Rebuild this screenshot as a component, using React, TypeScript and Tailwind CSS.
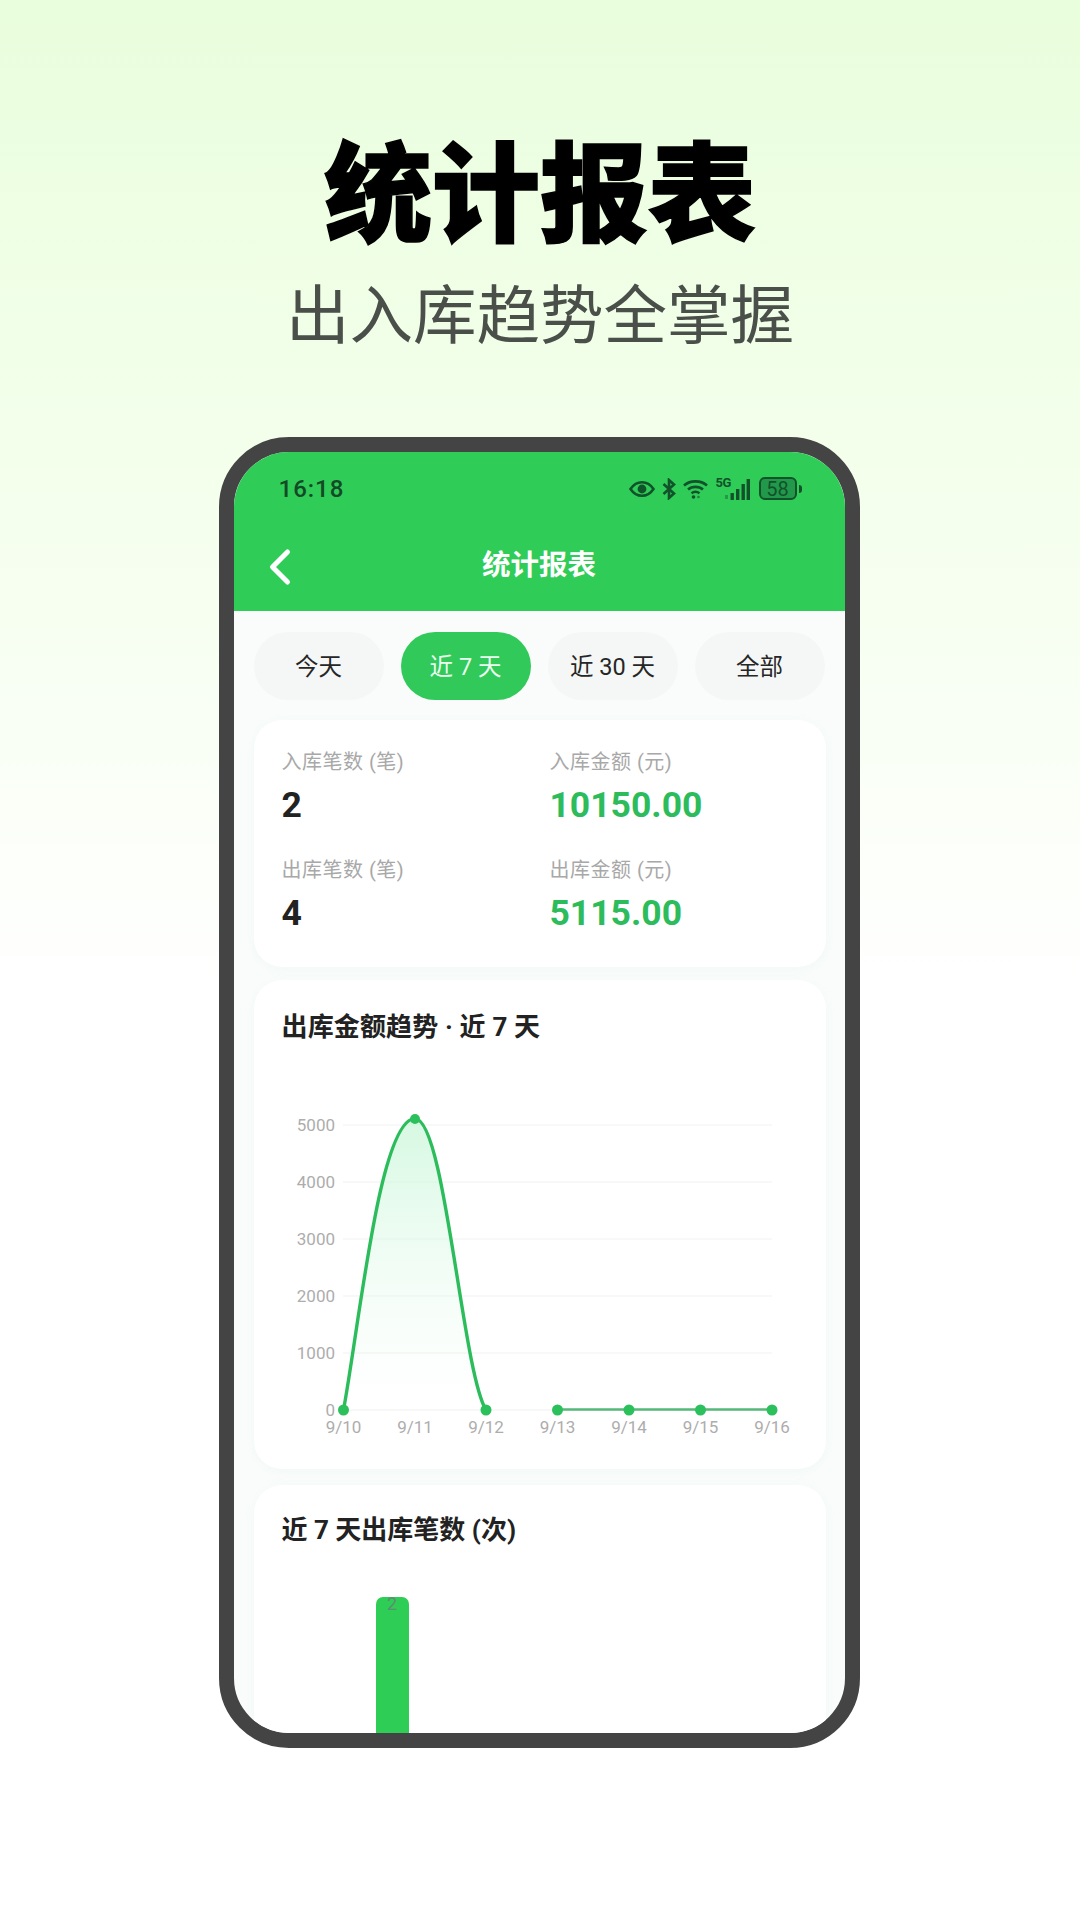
import { ChevronLeft } from 'lucide-react';

const tabs = ['今天', '近 7 天', '近 30 天', '全部'];

const stats = [
  { label: '入库笔数 (笔)', value: '2', green: false },
  { label: '入库金额 (元)', value: '10150.00', green: true },
  { label: '出库笔数 (笔)', value: '4', green: false },
  { label: '出库金额 (元)', value: '5115.00', green: true },
];

const yTicks = [
  { label: '5000', y: 125 },
  { label: '4000', y: 182 },
  { label: '3000', y: 239 },
  { label: '2000', y: 296 },
  { label: '1000', y: 353 },
  { label: '0', y: 410 },
];

const dates = ['9/10', '9/11', '9/12', '9/13', '9/14', '9/15', '9/16'];
const pointX = [90.5, 162, 233, 304.5, 376, 447.5, 519];

function StatusIcons() {
  return (
    <div className="flex items-center text-[#12522a]">
      <svg width="26" height="18" viewBox="0 0 26 18" fill="none">
        <path d="M1.5 9C4.5 4.5 8 2.2 13 2.2S21.5 4.5 24.5 9C21.5 13.5 18 15.8 13 15.8S4.5 13.5 1.5 9Z" stroke="currentColor" strokeWidth="2.6" />
        <circle cx="13" cy="9" r="4.4" fill="currentColor" />
      </svg>
      <svg className="ml-[7px]" width="14" height="22" viewBox="0 0 14 22" fill="none">
        <path d="M1.5 6L12 15.5L7 20V2L12 6.5L1.5 16" stroke="currentColor" strokeWidth="2.6" />
      </svg>
      <svg className="ml-[7px]" width="25" height="20" viewBox="0 0 25 20" fill="none">
        <path d="M1 6.5C7 1 18 1 24 6.5" stroke="currentColor" strokeWidth="2.6" />
        <path d="M5 10.5C9 7 16 7 20 10.5" stroke="currentColor" strokeWidth="2.6" />
        <path d="M8.5 14.2C11 12.3 14 12.3 16.5 14.2" stroke="currentColor" strokeWidth="2.4" />
        <circle cx="10.5" cy="18" r="1.8" fill="currentColor" />
        <circle cx="15.5" cy="18" r="1.3" fill="currentColor" opacity="0.6" />
      </svg>
      <div className="relative ml-[8px] h-[24px] w-[34px]">
        <span className="absolute left-0 top-[-1px] text-[13px] font-bold leading-[14px] tracking-[-0.5px]">5G</span>
        <svg className="absolute bottom-0 left-0" width="34" height="24" viewBox="0 0 34 24" fill="currentColor">
          <rect x="9" y="18" width="3" height="4" opacity="0.4" />
          <rect x="14.5" y="16" width="3.4" height="7" />
          <rect x="20" y="12" width="3.4" height="11" />
          <rect x="25.5" y="7" width="3.4" height="16" />
          <rect x="30.6" y="2" width="3.4" height="21" />
        </svg>
      </div>
      <div className="ml-[9px] flex h-[23px] w-[38px] items-center justify-center rounded-[6px] border-2 border-current bg-[#22994a] text-[20px] leading-none">
        58
      </div>
      <div className="ml-[2px] h-[8px] w-[3px] rounded-r-sm bg-current" />
    </div>
  );
}

function TrendChart() {
  return (
    <svg className="mt-[36px] block" width="574" height="360" viewBox="1 80 574 360">
      <defs>
        <linearGradient id="area" x1="0" y1="0" x2="0" y2="1">
          <stop offset="0%" stopColor="#c8f6d8" stopOpacity="0.75" />
          <stop offset="100%" stopColor="#eafcf0" stopOpacity="0" />
        </linearGradient>
      </defs>
      {yTicks.map((t) => (
        <g key={t.label}>
          <line x1="90" x2="519" y1={t.y} y2={t.y} stroke="#f4f6f5" strokeWidth="1.5" />
          <text x="82" y={t.y + 6} textAnchor="end" fontSize="17" fill="#adadad">
            {t.label}
          </text>
        </g>
      ))}
      <path d="M90.5 410C107 320 127 118.6 162 118.6C192 118.6 209 370 233 410Z" fill="url(#area)" />
      <path
        d="M90.5 410C107 320 127 118.6 162 118.6C192 118.6 209 370 233 410"
        fill="none"
        stroke="#2cbc5c"
        strokeWidth="3.4"
      />
      <line x1="304.5" x2="519" y1="409.5" y2="409.5" stroke="#55b878" strokeWidth="2.4" />
      {pointX.map((x, i) => (
        <g key={dates[i]}>
          {i !== 1 && <circle cx={x} cy="410" r="5.5" fill="#2cc05c" />}
          <text x={x} y="433" textAnchor="middle" fontSize="17" fill="#adadad">
            {dates[i]}
          </text>
        </g>
      ))}
      <circle cx="162" cy="119" r="5" fill="#2cc05c" />
    </svg>
  );
}

export default function App() {
  return (
    <div className="flex h-[1920px] w-[1080px] flex-col items-center overflow-hidden bg-linear-to-b from-[#e9fedd] via-[#f4ffec] via-[25%] to-white to-[52%] font-['Roboto','Noto_Sans_CJK_SC',sans-serif]">
      <h1 className="mt-[142px] h-[108px] text-[108px] font-black leading-[108px] text-black [-webkit-text-stroke:1.5px_black]">
        统计报表
      </h1>
      <p className="mt-[37px] h-[60px] text-[63.5px] leading-[60px] text-[#4a4f4a]">出入库趋势全掌握</p>

      {/* 手机外框 */}
      <div className="mr-[2px] mt-[90px] h-[1311px] w-[641px] overflow-hidden rounded-[70px] border-[15px] border-[#444444] bg-[#f9fcfb]">
        <header className="h-[159px] bg-[#30cc58]">
          <div className="flex h-[72px] items-center justify-between pl-[45px] pr-[43px] pt-[1px]">
            <span className="text-[24px] font-medium tracking-[1px] text-[#134a25]">16:18</span>
            <StatusIcons />
          </div>
          <div className="relative flex h-[80px] items-center justify-center pt-[5px]">
            <ChevronLeft className="absolute left-[16px] text-white" size={60} strokeWidth={2} />
            <span className="text-[28.5px] font-bold text-white">统计报表</span>
          </div>
        </header>

        <div className="flex gap-[17px] pl-[20px] pr-[18px] pt-[21px]">
          {tabs.map((tab, index) => (
            <div
              key={tab}
              className={`flex h-[68px] w-[130px] items-center justify-center rounded-[34px] pt-[3px] text-[23.5px] ${
                index === 1 ? 'bg-[#30c95a] text-[#eafff0]' : 'bg-[#f5f7f7] text-[#262626]'
              }`}
            >
              {tab}
            </div>
          ))}
        </div>

        {/* 汇总 */}
        <div className="ml-[20px] mr-[19px] mt-[20px] grid h-[247px] grid-cols-[268px_1fr] content-start rounded-[28px] bg-white pl-[28px] pt-[27px] shadow-[0_2px_10px_rgba(230,240,235,0.3)]">
          {stats.map((s) => (
            <div key={s.label} className="h-[108px]">
              <div className="h-[30px] text-[20px] leading-[30px] tracking-[0.5px] text-[#a8a8a8]">{s.label}</div>
              <div
                className={`mt-[6px] text-[35.5px] font-bold leading-[44px] ${
                  s.green ? 'text-[#2cbc5c]' : 'text-[#222222]'
                }`}
              >
                {s.value}
              </div>
            </div>
          ))}
        </div>

        {/* 金额趋势 */}
        <div className="ml-[20px] mr-[19px] mt-[13px] h-[489px] rounded-[28px] bg-white pt-[30px] shadow-[0_2px_10px_rgba(230,240,235,0.3)]">
          <div className="pl-[28px] text-[26px] font-bold leading-[34px] tracking-[0.15px] text-[#222222]">出库金额趋势 · 近 7 天</div>
          <TrendChart />
        </div>

        {/* 笔数 */}
        <div className="ml-[20px] mr-[19px] mt-[16px] h-[300px] rounded-t-[28px] bg-white pl-[28px] pt-[28px] shadow-[0_2px_10px_rgba(230,240,235,0.3)]">
          <div className="text-[26px] font-bold leading-[34px] text-[#222222]">近 7 天出库笔数 (次)</div>
          <div className="ml-[94px] mt-[50px] h-[200px] w-[33px] rounded-t-[7px] bg-[#2dcd56] text-center text-[18px] leading-[13px] text-[#5d8f6e]">
            2
          </div>
        </div>
      </div>
    </div>
  );
}
